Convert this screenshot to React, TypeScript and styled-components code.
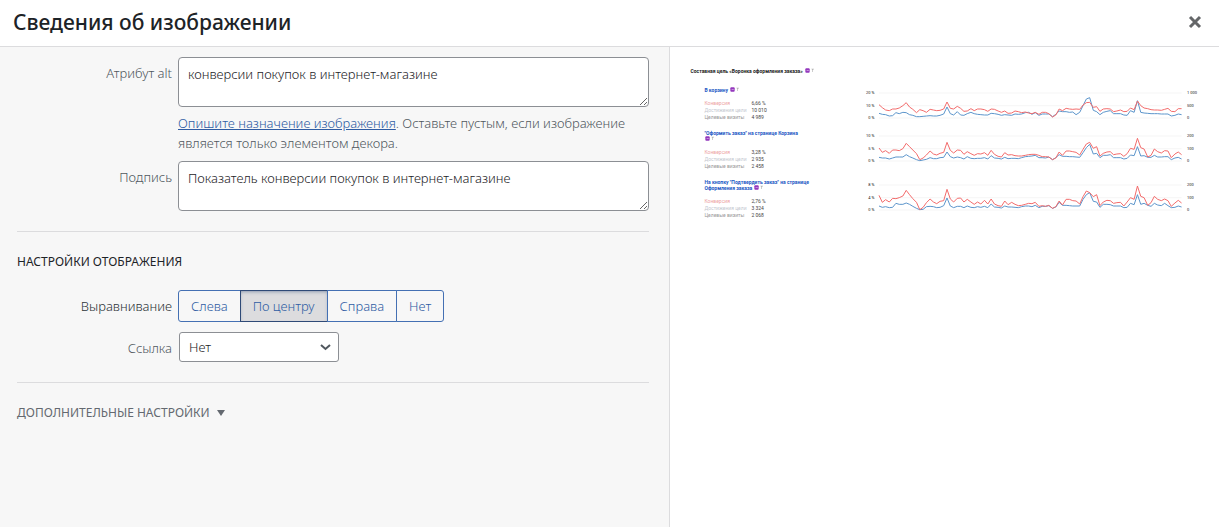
import React from "react";
import styled, { createGlobalStyle } from "styled-components";

const GlobalStyle = createGlobalStyle`
  *, *::before, *::after { box-sizing: border-box; }
  html, body, #root { height: 100%; }
  body {
    margin: 0;
    background: #fff;
    color: #3c434a;
    font-family: "Noto Sans", "Open Sans", sans-serif;
    font-size: 13px;
    font-weight: 300;
    line-height: 20px;
  }
`;

const Modal = styled.div`
  display: flex;
  flex-direction: column;
  min-height: 100%;
`;

const Header = styled.header`
  display: flex;
  align-items: center;
  justify-content: space-between;
  height: 47px;
  padding: 0 12px 3px 13px;
  border-bottom: 1px solid #dcdcde;
`;

const Title = styled.h1`
  margin: 0;
  font-size: 21px;
  line-height: 28px;
  font-weight: 500;
  color: #1d2327;
`;

const CloseButton = styled.button`
  display: flex;
  padding: 4px;
  border: 0;
  background: none;
  color: #646668;
  cursor: pointer;
`;

const Body = styled.main`
  display: flex;
  flex: 1;
`;

const Settings = styled.section`
  width: 55%;
  padding: 10px 20px 24px 17px;
  background: #f7f7f7;
  border-right: 1px solid #dcdcde;
`;

const Group = styled.div`
  & + & {
    margin-top: 20px;
    padding-top: 20px;
    border-top: 1px solid #dcdcde;
  }
`;

const Field = styled.div<{ $top?: number }>`
  display: grid;
  grid-template-columns: 155px 1fr;
  column-gap: 6px;
  margin-top: ${(p) => p.$top ?? 0}px;

  & > :first-child {
    padding-top: 6px;
    text-align: right;
  }
`;

const Label = styled.label<{ $dark?: boolean }>`
  color: ${(p) => (p.$dark ? "#2c3338" : "#50575e")};
`;

const TextArea = styled.textarea`
  display: block;
  width: 100%;
  height: 50px;
  padding: 6px 9px;
  border: 1px solid #8c8f94;
  border-radius: 4px;
  background: #fff;
  color: #1d2327;
  font: inherit;
  resize: vertical;
`;

const Description = styled.p`
  margin: 6px 0 0;
  color: #50575e;
`;

const Link = styled.a`
  color: #2f5ca3;
`;

const Heading = styled.h2`
  margin: 0;
  font-size: 12px;
  line-height: 20px;
  font-weight: 400;
  text-transform: uppercase;
  color: #1d2327;
`;

const ButtonGroup = styled.div`
  display: flex;
`;

const AlignButton = styled.button<{ $active?: boolean }>`
  height: 32px;
  padding: 0 12px;
  margin-right: -1px;
  border: 1px solid ${(p) => (p.$active ? "#2f4a77" : "#4470b3")};
  background: ${(p) => (p.$active ? "#dcdcde" : "#f7f7f7")};
  box-shadow: ${(p) => (p.$active ? "inset 0 2px 5px -3px #2f4a77" : "none")};
  color: #2f5ca3;
  font: inherit;
  cursor: pointer;

  &:first-child { border-radius: 3px 0 0 3px; }
  &:last-child { border-radius: 0 3px 3px 0; margin-right: 0; }
`;

const SelectBox = styled.div`
  display: grid;
  width: 160px;
  margin-left: 1px;
  align-items: center;

  & > * { grid-area: 1 / 1; }
  & > svg { justify-self: end; margin-right: 7px; pointer-events: none; }
`;

const Select = styled.select`
  width: 100%;
  height: 30px;
  padding: 0 24px 0 9px;
  appearance: none;
  border: 1px solid #8c8f94;
  border-radius: 3px;
  background: #fff;
  color: #1d2327;
  font: inherit;
`;

const AdvancedToggle = styled.button`
  display: flex;
  align-items: center;
  gap: 7px;
  padding: 0;
  border: 0;
  background: none;
  color: #646970;
  font: inherit;
  font-size: 12px;
  font-weight: 400;
  text-transform: uppercase;
  cursor: pointer;
`;

const Preview = styled.section`
  flex: 1;
  min-width: 0;
  padding: 21px 16px 16px 20px;
  font-family: Roboto, "Open Sans", sans-serif;
  font-size: 5px;
  font-weight: 400;
  line-height: 6px;
`;

const Report = styled.figure`
  margin: 0;
`;

const ReportTitle = styled.figcaption`
  color: #222;
  font-weight: 700;
`;

const Goals = styled.div`
  display: flex;
  flex-direction: column;
  gap: 9px;
  margin: 13px 0 0 14px;
`;

const Goal = styled.div`
  display: flex;
`;

const GoalInfo = styled.div`
  flex: 0 0 116px;
  padding-right: 11px;
`;

const GoalName = styled.div`
  color: #2257c4;
  font-weight: 700;
`;

const MarkIcon = styled.svg`
  width: 10px;
  height: 5px;
  margin-left: 1px;
  vertical-align: top;
`;

const Metrics = styled.table`
  margin-top: 7px;
  border-collapse: collapse;
  line-height: 7px;
  color: #444;

  th, td { padding: 0; text-align: left; font-weight: 400; }
  th { width: 47px; color: #999; }
  tr:nth-child(1) th { color: #eda3a3; }
  tr:nth-child(2) th { color: #c4c8d0; }
`;

const Axis = styled.div<{ $side: "left" | "right" }>`
  display: flex;
  flex-direction: column;
  justify-content: space-between;
  flex: 0 0 ${(p) => (p.$side === "left" ? 54 : 16)}px;
  height: 31px;
  margin-top: 3px;
  text-align: ${(p) => (p.$side === "left" ? "right" : "left")};
  font-size: 4px;
  color: #222;
`;

const Plot = styled.svg`
  flex: 1;
  min-width: 0;
  height: 25px;
  margin: 6px 5px 0 5px;
  overflow: visible;
`;

type GoalData = {
  name: string;
  metrics: [string, string, string];
  left: string[];
  right: string[];
  base: number;
  red: number[];
  blue: number[];
};

const goals: GoalData[] = [
  {
    name: "В корзину",
    metrics: ["6,66 %", "10 010", "4 989"],
    left: ["20 %", "10 %", "0 %"],
    right: ["1 000", "500", "0"],
    base: 24,
    red: [59,68,75,77,72,72,69,62,53,66,73,83,74,77,82,73,75,77,76,72,51,70,72,64,70,79,78,71,77,72,72,74,79,72,73,78,82,78,85,84,78,80,83,81,84,86,82,88,82,82,86,96,90,72,77,70,72,73,72,73,60,53,52,67,65,79,72,71,72,80,78,75,80,79,69,74,48,62,69,71,74,75,75,76,73,70,79,80,71,71],
    blue: [85,88,89,93,92,83,86,82,83,89,91,95,95,94,93,92,93,93,91,87,66,86,90,80,90,91,86,82,86,88,89,90,90,85,86,88,91,89,90,91,87,88,87,83,82,88,83,91,87,87,87,95,88,78,80,80,82,81,89,82,62,42,38,76,80,89,82,79,77,86,86,86,90,91,77,82,47,82,84,85,86,86,86,87,87,87,93,91,87,89],
  },
  {
    name: "\"Оформить заказ\" на странице Корзина",
    metrics: ["3,28 %", "2 935", "2 458"],
    left: ["10 %", "5 %", "0 %"],
    right: ["200", "100", "0"],
    base: 155,
    red: [191,204,199,207,197,197,199,193,177,187,197,208,226,221,212,200,209,212,207,204,174,198,206,197,198,210,202,208,213,208,209,205,213,198,210,216,218,205,212,211,214,215,215,213,211,210,210,213,217,217,218,226,221,203,213,200,200,202,204,212,195,179,174,192,187,215,207,203,202,211,209,208,216,208,192,195,162,190,194,218,213,194,202,206,199,200,220,209,203,211],
    blue: [219,221,221,224,221,218,218,218,211,217,221,226,229,227,225,220,223,223,220,219,203,217,221,218,220,224,217,222,223,222,222,220,224,214,221,222,224,219,223,222,222,223,220,217,216,215,213,220,220,221,218,226,220,211,216,216,217,217,218,219,205,190,180,209,207,220,213,213,211,220,220,220,224,222,212,214,187,215,214,219,219,213,218,218,217,217,226,221,219,224],
  },
  {
    name: "На кнопку \"Подтвердить заказ\" на странице Оформления заказа",
    metrics: ["2,76 %", "3 324", "2 068"],
    left: ["8 %", "4 %", "0 %"],
    right: ["200", "100", "0"],
    base: 303,
    red: [334,355,347,354,343,344,341,336,319,332,344,355,377,370,356,345,354,359,352,350,316,345,354,343,342,354,346,354,361,354,360,349,360,345,360,365,367,351,362,355,361,365,364,361,358,359,355,367,365,367,364,373,368,351,363,346,346,350,351,360,338,321,326,338,332,365,354,349,350,358,356,355,366,354,341,346,306,337,341,364,356,337,346,350,345,350,367,357,349,357],
    blue: [366,370,368,371,370,358,361,361,357,361,367,373,377,376,368,367,368,371,370,365,342,366,371,367,367,371,366,370,371,368,370,367,371,360,369,370,372,366,369,369,370,371,368,366,366,368,364,371,367,367,365,373,369,355,364,364,365,366,366,366,346,332,326,352,354,370,361,361,362,366,366,366,371,370,358,362,332,361,358,364,367,358,363,365,358,365,371,370,366,369],
  },
];

const metricNames = ["Конверсия", "Достижения цели", "Целевые визиты"];

function line(values: number[], base: number) {
  const step = 912 / (values.length - 1);
  return values.map((v, i) => `${Math.round(i * step)},${v - base}`).join(" ");
}

function Chart({ data }: { data: GoalData }) {
  return (
    <Plot viewBox="0 0 912 75" preserveAspectRatio="none" aria-hidden="true">
      <path d="M0 0H912M0 38H912M0 75H912" stroke="#f0f0f0" strokeWidth="2" />
      <polyline points={line(data.blue, data.base)} fill="none" stroke="#5b95cb" strokeWidth="3" strokeLinejoin="round" />
      <polyline points={line(data.red, data.base)} fill="none" stroke="#f26a6a" strokeWidth="3" strokeLinejoin="round" />
    </Plot>
  );
}

function Mark() {
  return (
    <MarkIcon viewBox="0 0 30 15" aria-hidden="true">
      <rect x="1" y="1" width="13" height="13" rx="3" fill="#9438bd" />
      <path d="M5 6L8 9L11 6" stroke="#ecd4f5" strokeWidth="2" fill="none" />
      <path d="M19 2H27L24 7V12H22V7Z" fill="#b5b5b5" />
    </MarkIcon>
  );
}

export default function App() {
  return (
    <>
      <GlobalStyle />
      <Modal>
        <Header>
          <Title>Сведения об изображении</Title>
          <CloseButton aria-label="Закрыть">
            <svg width="16" height="16" viewBox="0 0 16 16" aria-hidden="true">
              <path d="M3 3L13 13M13 3L3 13" stroke="currentColor" strokeWidth="3" />
            </svg>
          </CloseButton>
        </Header>
        <Body>
          <Settings>
            <Group>
              <Field>
                <Label htmlFor="alt">Атрибут alt</Label>
                <div>
                  <TextArea id="alt" defaultValue="конверсии покупок в интернет-магазине" />
                  <Description>
                    <Link href="#alt-help">Опишите назначение изображения</Link>. Оставьте пустым, если изображение
                    является только элементом декора.
                  </Description>
                </div>
              </Field>
              <Field $top={8}>
                <Label htmlFor="caption">Подпись</Label>
                <TextArea id="caption" defaultValue="Показатель конверсии покупок в интернет-магазине" />
              </Field>
            </Group>
            <Group>
              <Heading>Настройки отображения</Heading>
              <Field $top={18}>
                <Label as="span" $dark id="align">Выравнивание</Label>
                <ButtonGroup role="group" aria-labelledby="align">
                  <AlignButton>Слева</AlignButton>
                  <AlignButton $active aria-pressed="true">По центру</AlignButton>
                  <AlignButton>Справа</AlignButton>
                  <AlignButton>Нет</AlignButton>
                </ButtonGroup>
              </Field>
              <Field $top={10}>
                <Label htmlFor="link">Ссылка</Label>
                <SelectBox>
                  <Select id="link" defaultValue="none">
                    <option value="none">Нет</option>
                    <option value="file">Медиафайл</option>
                  </Select>
                  <svg width="13" height="8" viewBox="0 0 13 8" aria-hidden="true">
                    <path d="M2 2L6.500 6L11 2" fill="none" stroke="#50575e" strokeWidth="2" />
                  </svg>
                </SelectBox>
              </Field>
            </Group>
            <Group>
              <AdvancedToggle aria-expanded="false">
                Дополнительные настройки
                <svg width="8" height="6" viewBox="0 0 8 6" aria-hidden="true">
                  <path d="M0 0H8L4 6Z" fill="currentColor" />
                </svg>
              </AdvancedToggle>
            </Group>
          </Settings>
          <Preview aria-label="Изображение">
            <Report>
              <ReportTitle>
                Составная цель «Воронка оформления заказа» <Mark />
              </ReportTitle>
              <Goals>
                {goals.map((g, i) => (
                  <Goal key={i}>
                    <GoalInfo>
                      <GoalName>{g.name} <Mark /></GoalName>
                      <Metrics>
                        <tbody>
                          {metricNames.map((m, k) => (
                            <tr key={m}><th scope="row">{m}</th><td>{g.metrics[k]}</td></tr>
                          ))}
                        </tbody>
                      </Metrics>
                    </GoalInfo>
                    <Axis $side="left">{g.left.map((t) => <span key={t}>{t}</span>)}</Axis>
                    <Chart data={g} />
                    <Axis $side="right">{g.right.map((t) => <span key={t}>{t}</span>)}</Axis>
                  </Goal>
                ))}
              </Goals>
            </Report>
          </Preview>
        </Body>
      </Modal>
    </>
  );
}
